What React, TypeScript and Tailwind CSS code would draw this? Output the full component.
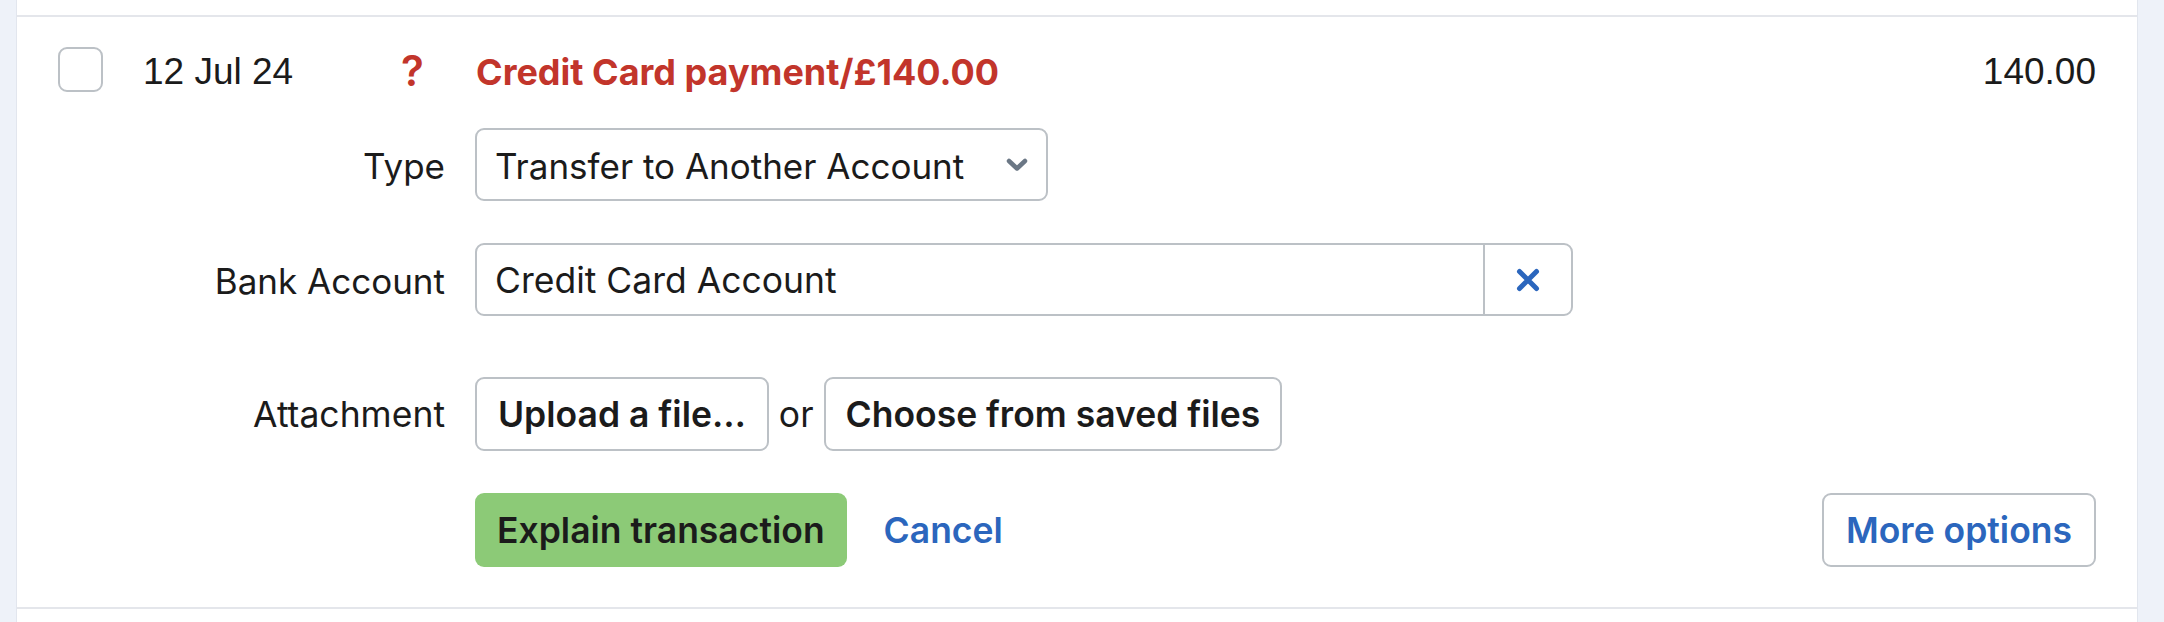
import React from "react";

const sans = { fontFamily: "Inter, 'Noto Sans', sans-serif" };
const arial = { fontFamily: "'Liberation Sans', Arial, sans-serif" };

function Chevron() {
  return (
    <svg width="24" height="15" viewBox="0 0 24 15" fill="none">
      <path d="M4 4 L12 11.5 L20 4" stroke="#6b7785" strokeWidth="4.5" strokeLinecap="round" strokeLinejoin="round" />
    </svg>
  );
}

function XIcon() {
  return (
    <svg width="24" height="24" viewBox="0 0 24 24" fill="none">
      <path d="M3.5 3.5 L20.5 20.5 M20.5 3.5 L3.5 20.5" stroke="#2b66bd" strokeWidth="5" strokeLinecap="round" />
    </svg>
  );
}

export default function App() {
  return (
    <div className="flex w-[2164px] h-[622px] bg-white text-[#1b1b1b]" style={sans}>
      <div className="w-[17px] h-full bg-[#eef2f9] border-r border-[#e2e6ee]" />
      <div className="flex-1 flex flex-col">
        <div className="h-[15px] bg-white" />
        <div className="border-t-2 border-b-2 border-[#e4e6eb] pt-[30px] pb-[40px] px-[41px] flex flex-col">
          {/* header row */}
          <div className="flex items-center h-[45px]">
            <div className="w-[45px] h-[45px] rounded-[9px] border-2 border-[#bcc1c6] bg-white shrink-0" />
            <div className="ml-[40px] w-[258px] text-[37px] leading-none pt-[4px]" style={arial}>
              12 Jul 24
            </div>
            <div className="w-[75px] text-[42px] font-semibold leading-none text-[#c2352b] pt-[2px]">?</div>
            <div className="text-[36px] font-bold leading-none text-[#c2352b] pt-[4px]">Credit Card payment/£140.00</div>
            <div className="ml-auto text-[37px] leading-none pt-[4px]" style={arial}>
              140.00
            </div>
          </div>

          {/* Type */}
          <div className="flex items-center mt-[36px]">
            <div className="w-[387px] text-right text-[35px] shrink-0 pt-[3px]">Type</div>
            <div className="ml-[30px] w-[573px] h-[73px] rounded-[9px] border-2 border-[#bcc1c6] bg-white flex items-center pl-[18px] pr-[17px]">
              <span className="text-[35px] flex-1 pt-[3px]">Transfer to Another Account</span>
              <Chevron />
            </div>
          </div>

          {/* Bank Account */}
          <div className="flex items-center mt-[42px]">
            <div className="w-[387px] text-right text-[35px] shrink-0 pt-[3px]">Bank Account</div>
            <div className="ml-[30px] w-[1098px] h-[73px] rounded-[9px] border-2 border-[#bcc1c6] bg-white flex items-stretch">
              <div className="flex-1 flex items-center pl-[18px] pt-[3px] text-[35.5px]">Credit Card Account</div>
              <div className="w-[88px] border-l-2 border-[#bcc1c6] flex items-center justify-center">
                <XIcon />
              </div>
            </div>
          </div>

          {/* Attachment */}
          <div className="flex items-center mt-[61px]">
            <div className="w-[387px] text-right text-[35.5px] shrink-0 pt-[2px]">Attachment</div>
            <div className="ml-[30px] flex items-center">
              <button className="h-[74px] px-[21px] pt-[2px] rounded-[9px] border-2 border-[#bcc1c6] bg-white text-[35.5px] font-semibold">
                Upload a file…
              </button>
              <span className="mx-[10px] pt-[2px] text-[35.5px]">or</span>
              <button className="h-[74px] px-[20px] pt-[2px] rounded-[9px] border-2 border-[#bcc1c6] bg-white text-[35.5px] font-semibold">
                Choose from saved files
              </button>
            </div>
          </div>

          {/* Buttons */}
          <div className="flex items-center mt-[42px]">
            <div className="w-[387px] shrink-0" />
            <div className="ml-[30px] flex-1 flex items-center">
              <button className="h-[74px] px-[22px] pt-[2px] rounded-[9px] bg-[#8cca77] text-[35.5px] font-semibold text-[#1b1b1b]">
                Explain transaction
              </button>
              <span className="ml-[37px] pt-[2px] text-[35.5px] font-semibold text-[#2b66bd]">Cancel</span>
              <button className="ml-auto h-[74px] px-[22px] pt-[2px] rounded-[9px] border-2 border-[#bcc1c6] bg-white text-[35.5px] font-semibold text-[#2b66bd]">
                More options
              </button>
            </div>
          </div>
        </div>
      </div>
      <div className="w-[27px] h-full bg-[#eef2f9] border-l border-[#e2e6ee]" />
    </div>
  );
}
